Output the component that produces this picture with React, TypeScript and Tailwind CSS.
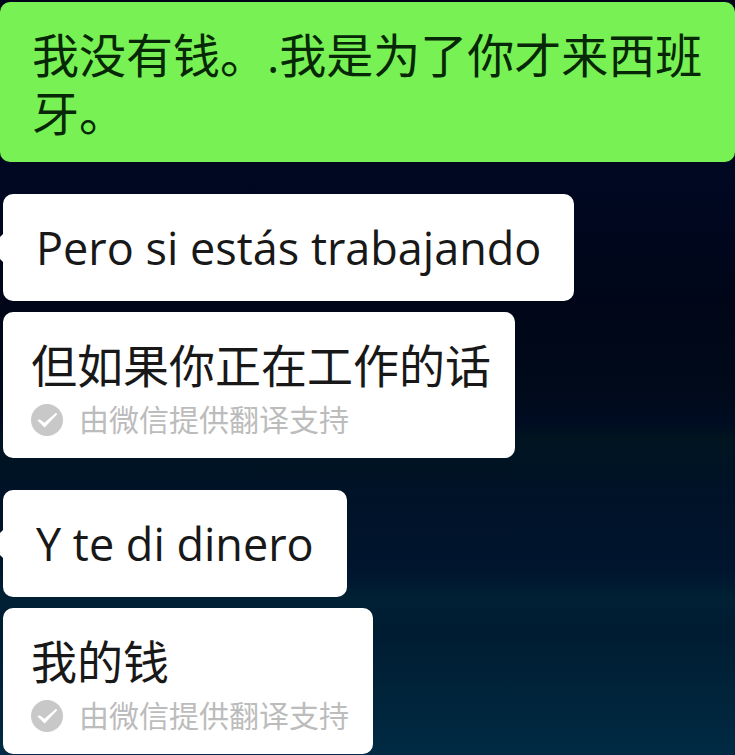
import type { ReactNode } from 'react';

type Message = {
  id: number;
  text: string;
  translation: string;
};

const messages: Message[] = [
  { id: 1, text: 'Pero si estás trabajando', translation: '但如果你正在工作的话' },
  { id: 2, text: 'Y te di dinero', translation: '我的钱' },
];

function CheckIcon() {
  return (
    <svg viewBox="0 0 32 32" className="size-8 shrink-0" aria-hidden="true">
      <circle cx="16" cy="16" r="16" fill="#c8c8c8" />
      <path
        d="M6.5 16.4 L8.6 15.2 L13.4 18.8 L25 8.8 L26.2 10.2 L13.6 23.4 Z"
        fill="#ffffff"
      />
    </svg>
  );
}

function Tail() {
  return (
    <svg
      viewBox="0 0 8 30"
      className="absolute -left-1 top-1/2 h-[30px] w-2 -translate-y-1/2"
      aria-hidden="true"
    >
      <path d="M5 0 L0 5 V25 L5 30 H8 V0 Z" fill="#ffffff" />
    </svg>
  );
}

function Bubble({ children }: { children: ReactNode }) {
  return (
    <div className="relative w-fit rounded-[10px] bg-white px-[33px] py-6">
      <Tail />
      <p lang="es" className="text-[45px] leading-[59px]">{children}</p>
    </div>
  );
}

function Translation({ children }: { children: ReactNode }) {
  return (
    <div className="w-fit rounded-[10px] bg-white pt-6 pr-6 pb-[18px] pl-7">
      <p className="text-[46px] leading-[58px]">{children}</p>
      <div className="mt-[6px] flex items-center gap-4 text-[30px] leading-10 text-[#bcbcbc]">
        <CheckIcon />
        <span>由微信提供翻译支持</span>
      </div>
    </div>
  );
}

export default function App() {
  return (
    <main
      lang="zh-CN"
      className="min-h-screen bg-[linear-gradient(to_bottom,#000418_0%,#000822_24%,#000618_40%,#000a1a_52%,#000c22_56%,#001420_58%,#001228_66%,#00162e_76%,#002034_79%,#001c32_84%,#00243a_92%,#002a44_100%)] pt-[2px] font-['Open_Sans','Noto_Sans_CJK_SC',sans-serif] text-[#181818]"
    >
      {/* Sent */}
      <div className="rounded-[10px] bg-[#78f154] pt-6 pr-7 pb-5 pl-8 text-[47px] leading-[58px] text-[#062806]">
        <p>我没有钱。.我是为了你才来西班牙。</p>
      </div>

      {/* Received */}
      <div className="flex flex-col gap-8 pt-8 pl-[3px]">
        {messages.map((message) => (
          <section key={message.id} className="flex flex-col gap-[11px]">
            <Bubble>{message.text}</Bubble>
            <Translation>{message.translation}</Translation>
          </section>
        ))}
      </div>
    </main>
  );
}
